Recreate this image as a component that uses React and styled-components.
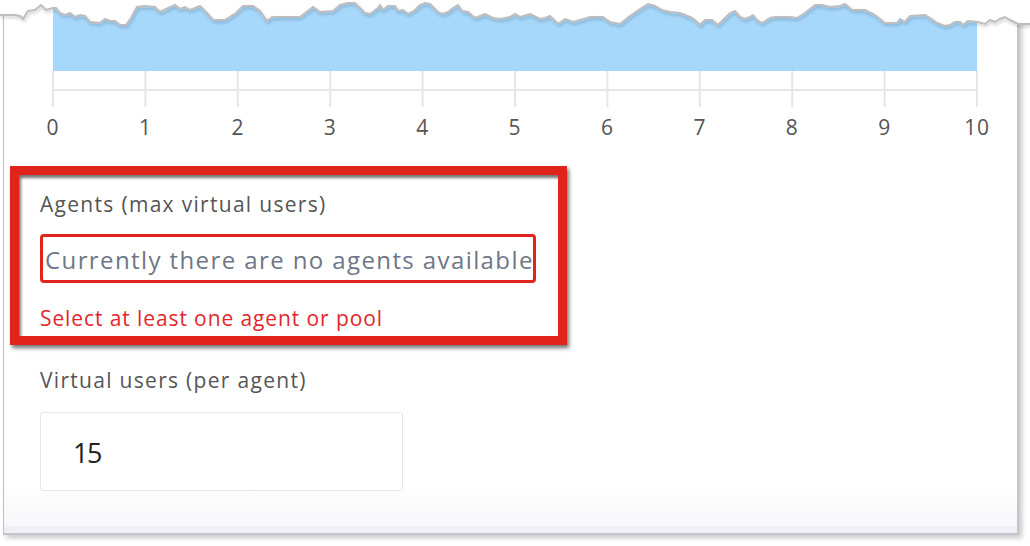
import React from "react";
import styled, { createGlobalStyle } from "styled-components";

// torn top edge of the clipped screenshot, page coordinates
const edge = [
  [0, 15], [14, 15], [20, 16], [23, 19], [28, 11], [35, 10], [41, 5], [46, 10], [53, 8], [56, 8],
  [60, 13], [65, 15], [70, 13], [75, 17], [80, 15], [85, 16], [90, 22], [100, 23], [105, 19],
  [110, 21], [115, 21], [120, 25], [126, 25], [131, 18], [137, 7], [145, 6], [155, 7], [160, 12],
  [166, 9], [175, 5], [180, 9], [185, 7], [190, 10], [200, 6], [207, 13], [213, 20], [225, 20],
  [236, 13], [243, 6], [253, 6], [260, 11], [267, 21], [272, 17], [280, 17], [300, 17], [313, 7],
  [320, 12], [333, 11], [340, 5], [348, 3], [355, 3], [365, 13], [370, 14], [378, 8], [380, 5],
  [383, 10], [388, 6], [395, 6], [398, 11], [403, 10], [408, 14], [415, 10], [420, 5], [425, 3],
  [430, 4], [438, 12], [442, 14], [448, 12], [453, 8], [458, 5], [462, 11], [468, 12], [475, 18],
  [480, 16], [485, 14], [493, 18], [500, 19], [510, 17], [515, 14], [520, 17], [527, 15], [530, 14],
  [540, 19], [545, 18], [550, 16], [558, 24], [565, 19], [573, 22], [580, 20], [590, 17], [603, 17],
  [610, 22], [620, 24], [630, 16], [640, 9], [648, 4], [655, 6], [662, 10], [670, 12], [680, 13],
  [690, 17], [695, 20], [700, 25], [705, 20], [712, 20], [718, 25], [725, 18], [730, 13], [735, 11],
  [740, 17], [745, 19], [750, 17], [753, 15], [757, 20], [762, 23], [770, 18], [775, 17], [790, 17],
  [797, 18], [805, 13], [815, 5], [822, 5], [830, 7], [840, 6], [845, 4], [852, 10], [865, 10],
  [875, 15], [885, 23], [897, 23], [900, 19], [905, 22], [910, 16], [925, 15], [930, 18], [937, 23],
  [945, 26], [950, 25], [955, 22], [960, 22], [963, 25], [968, 21], [978, 22], [985, 24], [990, 20],
  [995, 22], [1000, 19], [1005, 17], [1010, 20], [1018, 24], [1030, 24],
];

const ticks = [0, 1, 2, 3, 4, 5, 6, 7, 8, 9, 10];

const App = () => {
  const line = edge.map(([x, y], i) => `${i ? "L" : "M"}${x} ${y}`).join(" ");
  const x0 = 49;
  const step = 92.4;

  return (
    <>
      <GlobalStyle />
      <Page>
        <Frame>
          <Chart width="1012" height="146">
            <rect x={x0} y="0" width={step * 10} height="71" fill="#a6d8fc" />
            <line x1={x0} y1="90" x2={x0 + step * 10} y2="90" stroke="#e6e6e8" strokeWidth="2" />
            {ticks.map((t) => (
              <g key={t}>
                <line
                  x1={x0 + t * step}
                  y1="71"
                  x2={x0 + t * step}
                  y2="107"
                  stroke="#e6e6e8"
                  strokeWidth="2"
                />
                <AxisLabel x={x0 + t * step} y="135" textAnchor="middle">
                  {t}
                </AxisLabel>
              </g>
            ))}
          </Chart>

          <Annotated>
            <Label>Agents (max virtual users)</Label>
            <EmptyNote>Currently there are no agents available</EmptyNote>
            <ErrorText>Select at least one agent or pool</ErrorText>
          </Annotated>

          <Field>
            <Label>Virtual users (per agent)</Label>
            <NumberBox>15</NumberBox>
          </Field>
        </Frame>

        <TornEdge width="1030" height="34">
          <defs>
            <filter id="edgeShadow" x="-5%" y="-50%" width="110%" height="200%">
              <feDropShadow dx="1" dy="2" stdDeviation="1.4" floodColor="#000" floodOpacity="0.22" />
            </filter>
          </defs>
          <path d={`${line} L1030 0 L0 0 Z`} fill="#fff" />
          <path d={line} fill="none" stroke="#bdbdc0" strokeWidth="2" filter="url(#edgeShadow)" />
        </TornEdge>
      </Page>
    </>
  );
};

export default App;

/* styles */

const GlobalStyle = createGlobalStyle`
  html, body {
    margin: 0;
    background: #fff;
  }
  body {
    font-family: "Open Sans", Lato, sans-serif;
  }
`;

const Page = styled.div`
  position: relative;
  width: 1030px;
  height: 546px;
  overflow: hidden;
  background: #fff;
`;

const Frame = styled.div`
  box-sizing: border-box;
  margin-left: 3px;
  width: 1016px;
  height: 535px;
  display: flex;
  flex-direction: column;
  border-left: 1px solid #bfbfc6;
  border-right: 2px solid #c4c4ca;
  border-bottom: 2px solid #c4c4ca;
  box-shadow: 3px 3px 5px rgba(0, 0, 0, 0.22);
  background: linear-gradient(
    180deg,
    #fff 0,
    #fff 485px,
    #f7f7f9 526px,
    #eef0f5 527px,
    #eef0f5 100%
  );
`;

const Chart = styled.svg`
  display: block;
  flex-shrink: 0;
`;

const AxisLabel = styled.text`
  font-family: "Open Sans", Lato, sans-serif;
  font-size: 21px;
  letter-spacing: 0.8px;
  fill: #555;
`;

const TornEdge = styled.svg`
  position: absolute;
  top: 0;
  left: 0;
  display: block;
`;

const Annotated = styled.div`
  box-sizing: border-box;
  width: 557px;
  height: 179px;
  margin: 20px 0 0 6px;
  padding: 16px 0 0 21px;
  border: 9px solid #e0231b;
  background: #fff;
  box-shadow: 2px 3px 4px rgba(0, 0, 0, 0.55), inset 2px 3px 3px rgba(0, 0, 0, 0.55);
`;

const Label = styled.div`
  font-size: 21px;
  line-height: 26px;
  letter-spacing: 1.3px;
  color: #555;
  white-space: nowrap;
`;

const EmptyNote = styled.div`
  box-sizing: border-box;
  width: 496px;
  height: 49px;
  margin-top: 17px;
  padding-left: 2px;
  border: 3px solid #e0231b;
  border-radius: 4px;
  font-size: 24px;
  line-height: 45px;
  letter-spacing: 1.4px;
  color: #6e7687;
  white-space: nowrap;
`;

const ErrorText = styled.div`
  margin-top: 22px;
  font-size: 21px;
  line-height: 26px;
  letter-spacing: 0.9px;
  color: #e3262b;
  white-space: nowrap;
`;

const Field = styled.div`
  display: flex;
  flex-direction: column;
  margin: 22px 0 0 36px;
`;

const NumberBox = styled.div`
  box-sizing: border-box;
  width: 363px;
  height: 79px;
  margin-top: 19px;
  padding-left: 32px;
  border: 1.5px solid #e4e6ea;
  border-radius: 3px;
  font-size: 27px;
  line-height: 80px;
  letter-spacing: -1.5px;
  color: #222;
`;
